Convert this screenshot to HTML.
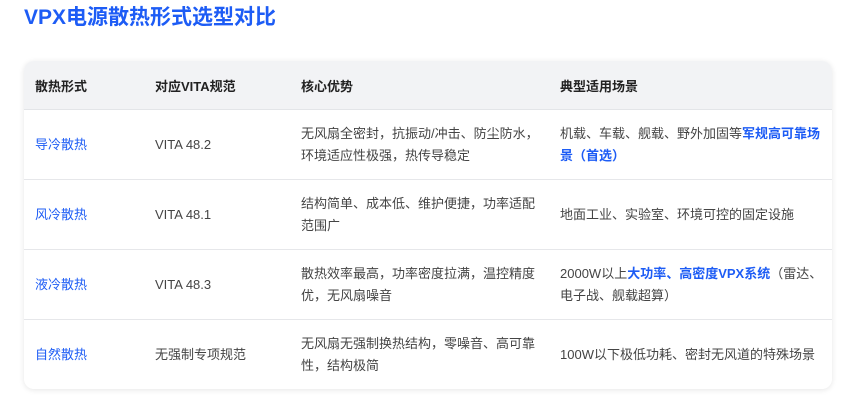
<!DOCTYPE html>
<html><head><meta charset="utf-8"><style>
body{margin:0;background:#fff;width:857px;height:409px;overflow:hidden;font-family:"Liberation Sans","Noto Sans CJK SC",sans-serif;}
h1{position:absolute;left:24px;top:3px;margin:0;font-size:21px;font-weight:bold;color:#1d5cf5;line-height:30px;}
.card{position:absolute;left:24px;top:61px;width:808px;height:328px;border-radius:10px;box-shadow:0 1px 6px rgba(0,0,0,0.10);overflow:hidden;background:#fff;}
table{border-collapse:collapse;width:808px;font-size:13px;color:#444;}
th{background:#f2f3f5;height:48px;text-align:left;font-weight:bold;color:#222;border-bottom:1px solid #e3e5e8;padding:0;}
td{height:69px;border-bottom:1px solid #e6e7ea;padding:0;line-height:22px;vertical-align:middle;}
tr:last-child td{border-bottom:none;}
.c1{padding-left:11px;width:120px}
.c2{width:146px}
.c3{width:259px;padding-right:0}
.b{color:#1d5cf5}
.bb{color:#1d5cf5;font-weight:bold}
</style></head><body>
<h1>VPX电源散热形式选型对比</h1>
<div class="card"><table>
<tr><th class="c1">散热形式</th><th class="c2">对应VITA规范</th><th class="c3">核心优势</th><th>典型适用场景</th></tr>
<tr><td class="c1 b">导冷散热</td><td>VITA 48.2</td><td>无风扇全密封，抗振动/冲击、防尘防水，<br>环境适应性极强，热传导稳定</td><td>机载、车载、舰载、野外加固等<span class="bb">军规高可靠场<br>景（首选）</span></td></tr>
<tr><td class="c1 b">风冷散热</td><td>VITA 48.1</td><td>结构简单、成本低、维护便捷，功率适配<br>范围广</td><td>地面工业、实验室、环境可控的固定设施</td></tr>
<tr><td class="c1 b">液冷散热</td><td>VITA 48.3</td><td>散热效率最高，功率密度拉满，温控精度<br>优，无风扇噪音</td><td>2000W以上<span class="bb">大功率、高密度VPX系统</span>（雷达、<br>电子战、舰载超算）</td></tr>
<tr><td class="c1 b">自然散热</td><td>无强制专项规范</td><td>无风扇无强制换热结构，零噪音、高可靠<br>性，结构极简</td><td>100W以下极低功耗、密封无风道的特殊场景</td></tr>
</table></div>
</body></html>
